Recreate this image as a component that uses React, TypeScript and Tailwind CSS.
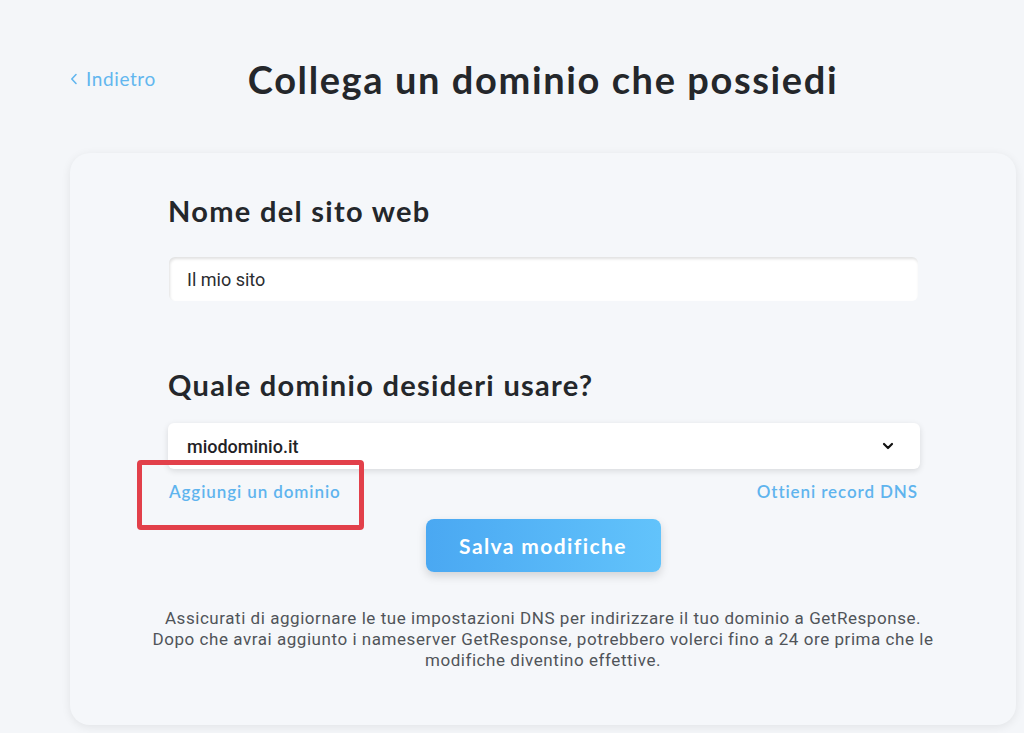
import React from "react";

export default function App() {
  return (
    <div className="min-h-[733px] w-[1024px] bg-[#f4f6f9] pl-[70px] pr-[8px] pt-[50px] font-['Roboto',sans-serif]">
      <div className="grid grid-cols-[1fr_auto_1fr] items-center h-[58px]">
        <a className="flex items-center gap-[8px] text-[19px] tracking-[0.6px] text-[#62b6ef] font-['Lato',sans-serif] justify-self-start">
          <svg width="8" height="12" viewBox="0 0 8 12" fill="none" stroke="#62b6ef" strokeWidth="1.6" strokeLinecap="round" strokeLinejoin="round">
            <path d="M6 1.5 L1.8 6 L6 10.5" />
          </svg>
          Indietro
        </a>
        <h1 className="text-[38px] tracking-[1.6px] font-bold text-[#24272b] font-['Lato',sans-serif]">Collega un dominio che possiedi</h1>
        <div />
      </div>
      <div className="mt-[45px] rounded-[20px] bg-[#f5f7fa] shadow-[0_2px_10px_rgba(0,0,0,0.08)] px-[98px] pt-[40px] pb-[54px]">
        <h2 className="text-[29px] tracking-[1.3px] leading-[36px] font-bold text-[#24272b] font-['Lato',sans-serif]">Nome del sito web</h2>
        <div className="mt-[28px] h-[44px] rounded-[6px] bg-white shadow-[inset_1px_2px_3px_rgba(0,0,0,0.12)] flex items-center pl-[18px] text-[18px] text-[#2a2d31] ml-[1px]">
          Il mio sito
        </div>
        <h2 className="mt-[66px] text-[29px] tracking-[1.3px] leading-[36px] font-bold text-[#24272b] font-['Lato',sans-serif]">Quale dominio desideri usare?</h2>
        <div className="mt-[20px] h-[46px] rounded-[6px] bg-white shadow-[0_2px_6px_rgba(0,0,0,0.12)] flex items-center justify-between pl-[19px] pr-[26px] mr-[-2px] text-[18px] font-medium text-[#1f2226]">
          <span>miodominio.it</span>
          <svg width="12" height="8" viewBox="0 0 12 8" fill="none" stroke="#111" strokeWidth="2.2" strokeLinecap="round" strokeLinejoin="round">
            <path d="M2 2 L6 6 L10 2" />
          </svg>
        </div>
        <div className="relative mt-[11px] flex justify-between h-[24px] items-center text-[17px] tracking-[0.9px] font-semibold text-[#5fb4ee] font-['Lato',sans-serif]">
          <div className="absolute left-[-31px] top-[-20px] w-[227px] h-[70px] border-[5px] border-[#e2404a] rounded-[4px]" />
          <a className="pl-[1px]">Aggiungi un dominio</a>
          <a>Ottieni record DNS</a>
        </div>
        <div className="mt-[15px] flex justify-center">
          <button className="w-[235px] h-[53px] rounded-[8px] bg-gradient-to-r from-[#4aa8f2] to-[#62c3fb] text-white text-[21px] tracking-[1.4px] font-bold font-['Lato',sans-serif] shadow-[0_4px_10px_rgba(0,0,0,0.15)]">
            Salva modifiche
          </button>
        </div>
        <p className="mt-[36px] -mx-[60px] whitespace-nowrap text-center text-[17px] tracking-[0.55px] leading-[21px] text-[#505459]">
          Assicurati di aggiornare le tue impostazioni DNS per indirizzare il tuo dominio a GetResponse.
          <br />
          Dopo che avrai aggiunto i nameserver GetResponse, potrebbero volerci fino a 24 ore prima che le
          <br />
          modifiche diventino effettive.
        </p>
      </div>
    </div>
  );
}
